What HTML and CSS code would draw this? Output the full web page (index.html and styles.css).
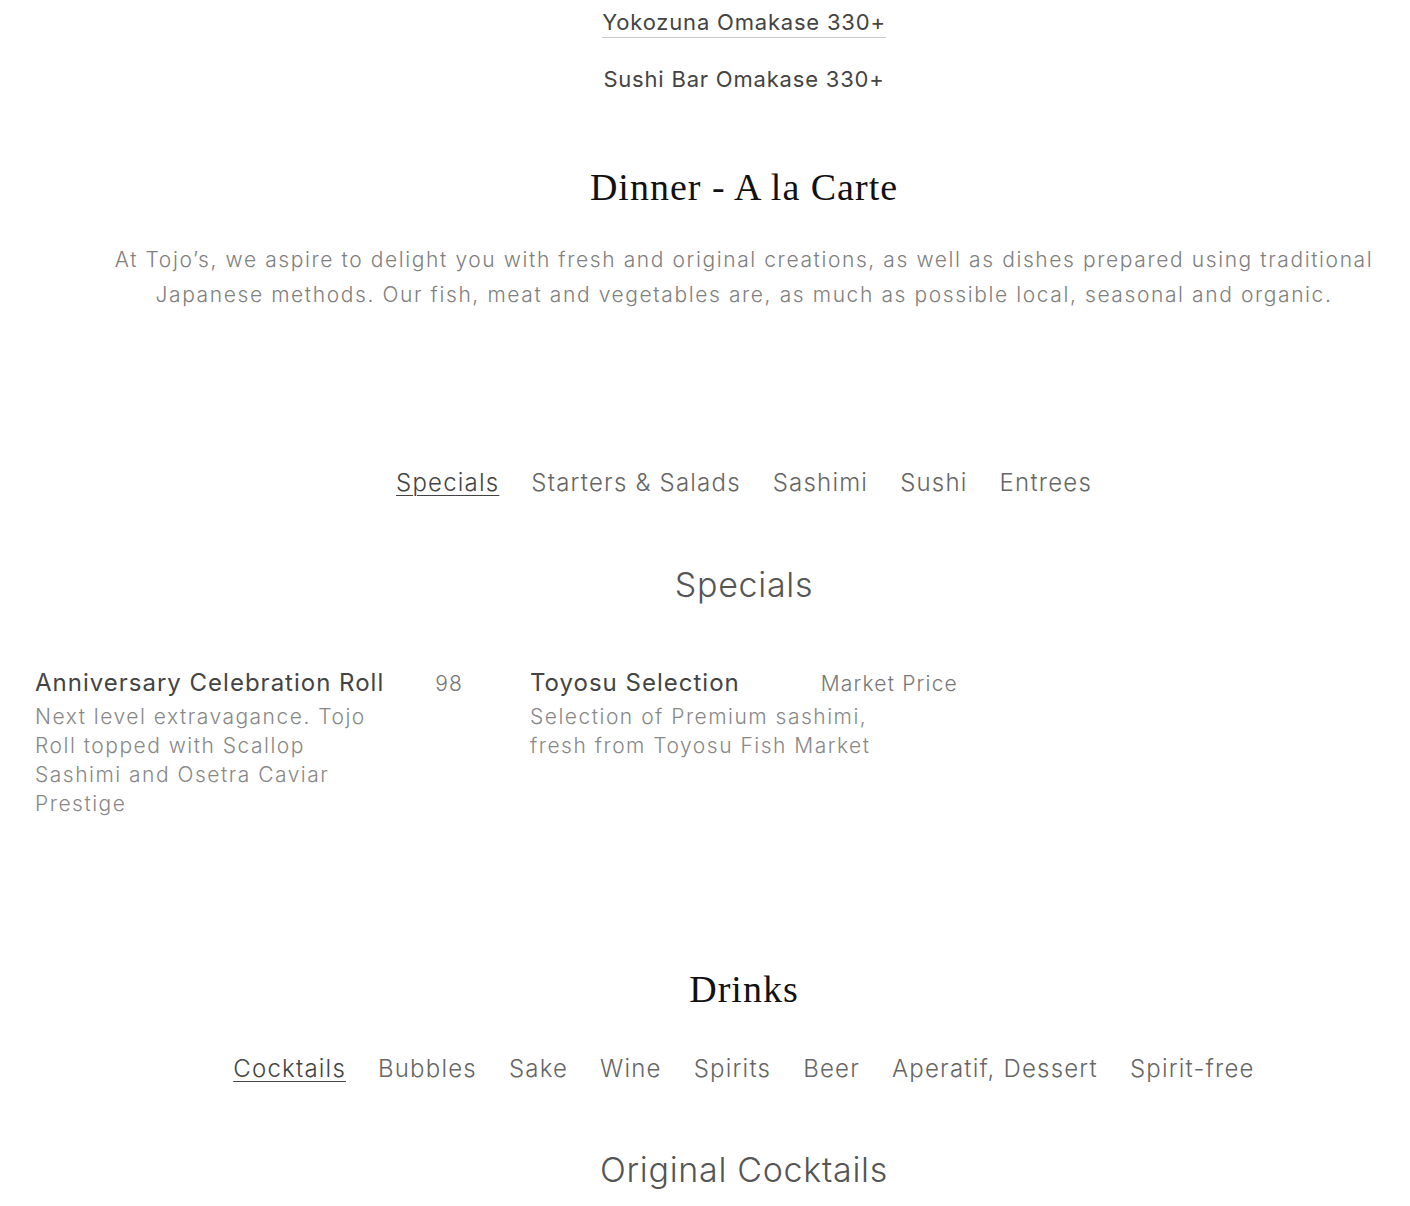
FILE: index.html
```html
<!DOCTYPE html>
<html lang="en">
<head>
    <meta charset="UTF-8">
    <meta name="viewport" content="width=device-width, initial-scale=1.0">
    <title>Tojo's - Menu</title>
    <link rel="stylesheet" href="styles.css">
</head>
<body>
    <div class="page">
        <nav class="omakase">
            <a href="#" class="omakase-link active">Yokozuna Omakase 330+</a>
            <a href="#" class="omakase-link">Sushi Bar Omakase 330+</a>
        </nav>

        <section class="menu-section">
            <h2 class="section-title">Dinner - A la Carte</h2>
            <p class="intro">At Tojo’s, we aspire to delight you with fresh and original creations, as well as dishes prepared using traditional Japanese methods. Our fish, meat and vegetables are, as much as possible local, seasonal and organic.</p>

            <ul class="tabs">
                <li><a href="#" class="tab active">Specials</a></li>
                <li><a href="#" class="tab">Starters &amp; Salads</a></li>
                <li><a href="#" class="tab">Sashimi</a></li>
                <li><a href="#" class="tab">Sushi</a></li>
                <li><a href="#" class="tab">Entrees</a></li>
            </ul>

            <h3 class="category">Specials</h3>

            <div class="items">
                <div class="item">
                    <div class="item-head">
                        <span class="item-name">Anniversary Celebration Roll</span>
                        <span class="item-price">98</span>
                    </div>
                    <p class="item-desc">Next level extravagance. Tojo Roll topped with Scallop Sashimi and Osetra Caviar Prestige</p>
                </div>
                <div class="item">
                    <div class="item-head">
                        <span class="item-name">Toyosu Selection</span>
                        <span class="item-price">Market Price</span>
                    </div>
                    <p class="item-desc">Selection of Premium sashimi, fresh from Toyosu Fish Market</p>
                </div>
            </div>
        </section>

        <section class="menu-section drinks">
            <h2 class="section-title">Drinks</h2>
            <ul class="tabs">
                <li><a href="#" class="tab active">Cocktails</a></li>
                <li><a href="#" class="tab">Bubbles</a></li>
                <li><a href="#" class="tab">Sake</a></li>
                <li><a href="#" class="tab">Wine</a></li>
                <li><a href="#" class="tab">Spirits</a></li>
                <li><a href="#" class="tab">Beer</a></li>
                <li><a href="#" class="tab">Aperatif, Dessert</a></li>
                <li><a href="#" class="tab">Spirit-free</a></li>
            </ul>
            <h3 class="category">Original Cocktails</h3>
        </section>
    </div>
</body>
</html>
```

FILE: styles.css
```css
/* menu page */
html {
    overflow-x: hidden;
}
body {
    margin: 0;
    font-family: Inter, "Liberation Sans", Arial, sans-serif;
    color: #444;
    background: #fff;
}
a {
    color: inherit;
    text-decoration: none;
}
.page {
    width: 1418px;
    padding: 7px 35px 40px;
}

/* omakase links */
.omakase {
    display: flex;
    flex-direction: column;
    align-items: center;
}
.omakase-link {
    font-size: 22px;
    line-height: 30px;
    letter-spacing: 0.8px;
    color: #444;
    margin-bottom: 27px;
}
.omakase-link.active {
    border-bottom: 1px solid #ccc;
    margin-bottom: 26px;
}

/* sections */
.menu-section {
    text-align: center;
}
.section-title {
    font-family: "Liberation Serif", "DejaVu Serif", serif;
    font-weight: 400;
    font-size: 38px;
    line-height: 48px;
    letter-spacing: 1px;
    color: #111;
    margin: 42px 0 31px;
}
.intro {
    max-width: 1300px;
    margin: 0 auto;
    font-size: 21px;
    font-weight: 300;
    line-height: 35px;
    letter-spacing: 1.6px;
    color: #808080;
}
.tabs {
    list-style: none;
    padding: 0;
    margin: 153px 0 0;
    display: flex;
    justify-content: center;
    gap: 32px;
}
.tab {
    font-size: 24px;
    font-weight: 300;
    line-height: 36px;
    letter-spacing: 1.2px;
    color: #666;
}
.tab.active {
    color: #444;
    text-decoration: underline;
    text-underline-offset: 4px;
    text-decoration-thickness: 1px;
}
.category {
    font-size: 34px;
    font-weight: 300;
    line-height: 44px;
    letter-spacing: 0.7px;
    color: #555;
    margin: 62px 0 60px;
}

/* items */
.items {
    display: grid;
    grid-template-columns: repeat(3, 428px);
    column-gap: 67px;
    text-align: left;
}
.item-head {
    display: flex;
    justify-content: space-between;
    align-items: baseline;
}
.item-name {
    font-size: 24px;
    line-height: 32px;
    letter-spacing: 1px;
    color: #444;
}
.item-price {
    font-size: 21px;
    font-weight: 300;
    letter-spacing: 1.2px;
    color: #777;
}
.item-desc {
    max-width: 352px;
    margin: 3px 0 0;
    font-size: 21px;
    font-weight: 300;
    line-height: 29px;
    letter-spacing: 1.5px;
    color: #888;
}

.drinks {
    margin-top: 147px;
}
.drinks .tabs {
    margin-top: 38px;
}
.drinks .category {
    margin-top: 61px;
}
```
